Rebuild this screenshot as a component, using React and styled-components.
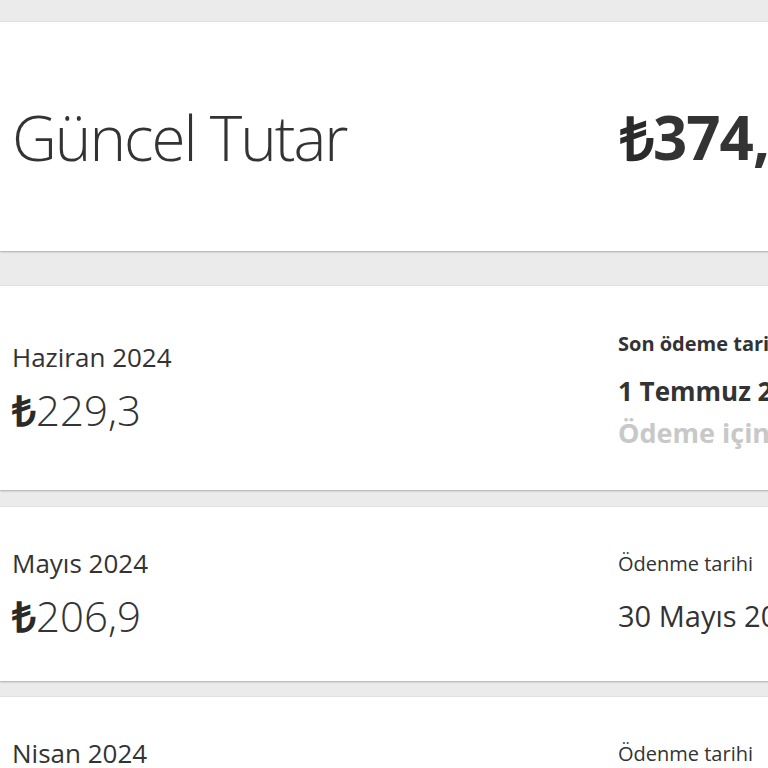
import React from "react";
import styled, { createGlobalStyle } from "styled-components";

const GlobalStyle = createGlobalStyle`
  html, body {
    margin: 0;
    padding: 0;
    background: #ebebeb;
    overflow: hidden;
  }
  body {
    font-family: "Open Sans", "Liberation Sans", sans-serif;
    color: #333;
  }
`;

const bills = [
  {
    month: "Haziran 2024",
    amount: "229,3",
    height: 204,
    gap: 35,
    unpaid: true,
    label: "Son ödeme tarihi",
    date: "1 Temmuz 2024",
    note: "Ödeme için son gün",
  },
  {
    month: "Mayıs 2024",
    amount: "206,9",
    height: 174,
    gap: 17,
    label: "Ödenme tarihi",
    date: "30 Mayıs 2024",
  },
  {
    month: "Nisan 2024",
    amount: "198,4",
    height: 174,
    gap: 16,
    label: "Ödenme tarihi",
    date: "29 Nisan 2024",
  },
];

const App = () => {
  return (
    <>
      <GlobalStyle />
      <Page>
        <Card $height={229} $gap={22}>
          <Row>
            <TotalTitle>Güncel Tutar</TotalTitle>
            <TotalAmount>
              <Lira>₺</Lira>374,6
            </TotalAmount>
          </Row>
        </Card>
        {bills.map((b) => (
          <Card key={b.month} $height={b.height} $gap={b.gap}>
            <Row>
              <Left>
                <Month>{b.month}</Month>
                <Amount>
                  <Lira>₺</Lira>
                  {b.amount}
                </Amount>
              </Left>
              <Right $bold={b.unpaid}>
                <DateLabel $bold={b.unpaid}>{b.label}</DateLabel>
                <DateValue $bold={b.unpaid}>{b.date}</DateValue>
                {b.note && <Note>{b.note}</Note>}
              </Right>
            </Row>
          </Card>
        ))}
      </Page>
    </>
  );
};

export default App;

const Page = styled.div`
  width: 980px;
  display: flex;
  flex-direction: column;
`;

const Card = styled.section`
  background: #fff;
  height: ${({ $height }) => $height}px;
  margin-top: ${({ $gap }) => $gap}px;
  flex-shrink: 0;
  box-shadow: 0 1px 2px rgba(0, 0, 0, 0.25), 0 0 1px rgba(0, 0, 0, 0.15);
  display: flex;
  align-items: center;
  padding-left: 12px;
`;

const Row = styled.div`
  display: grid;
  grid-template-columns: 606px 1fr;
  align-items: center;
  width: 100%;
`;

const TotalTitle = styled.h1`
  margin: 0;
  font-size: 62px;
  font-weight: 300;
  letter-spacing: -2px;
  color: #333;
`;

const TotalAmount = styled.div`
  font-size: 60px;
  font-weight: 700;
  color: #333;
  white-space: nowrap;
  letter-spacing: -1px;
  margin-left: 2px;
`;

const Lira = styled.span`
  font-weight: 700;
  color: #2a2a2a;
`;

const Left = styled.div`
  display: flex;
  flex-direction: column;
`;

const Month = styled.div`
  font-size: 26px;
  line-height: 34px;
  font-weight: 400;
  margin-bottom: 9px;
`;

const Amount = styled.div`
  font-size: 42px;
  line-height: 54px;
  font-weight: 300;
`;

const Right = styled.div`
  display: flex;
  flex-direction: column;
  white-space: nowrap;
  padding-top: ${({ $bold }) => ($bold ? 6 : 0)}px;
`;

const DateLabel = styled.div`
  font-size: 20px;
  line-height: 28px;
  font-weight: ${({ $bold }) => ($bold ? 700 : 400)};
  margin-bottom: ${({ $bold }) => ($bold ? 15 : 20)}px;
`;

const DateValue = styled.div`
  font-size: ${({ $bold }) => ($bold ? 26 : 29)}px;
  line-height: 36px;
  font-weight: ${({ $bold }) => ($bold ? 700 : 400)};
  margin-bottom: 4px;
`;

const Note = styled.div`
  font-size: 27px;
  line-height: 40px;
  font-weight: 700;
  color: #c8c8c8;
`;
